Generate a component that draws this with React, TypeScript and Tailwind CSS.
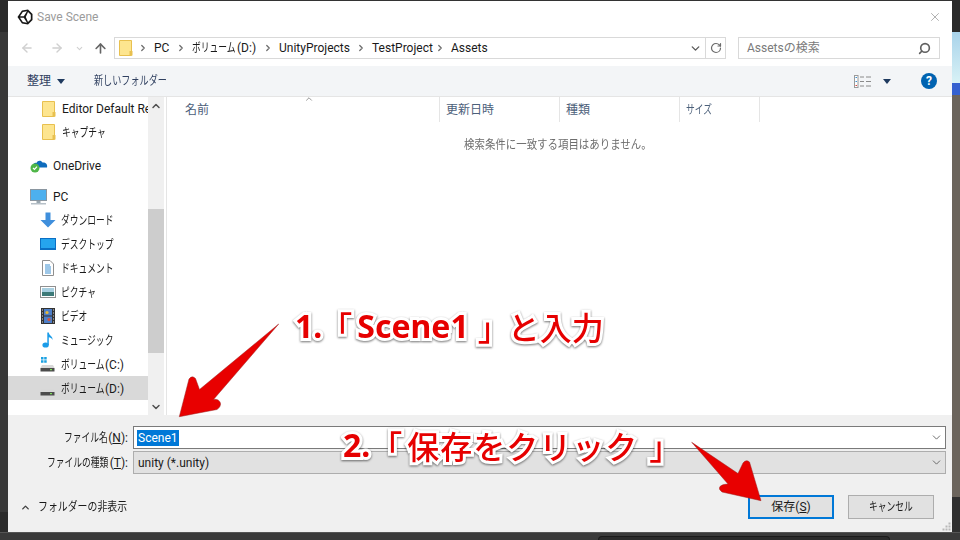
import React from "react";
import { ArrowLeft, ArrowRight, ArrowUp, ChevronDown, ChevronRight, ChevronUp, RotateCw, X, Search } from "lucide-react";

function K({ className = "", children }: { className?: string; children: React.ReactNode }) {
  return (
    <span className={"inline-block shrink-0 whitespace-nowrap " + className}>
      <span className="inline-block origin-left scale-x-[0.73] whitespace-nowrap">{children}</span>
    </span>
  );
}

function Folder({ className = "" }: { className?: string }) {
  return (
    <svg viewBox="0 0 14 16" className={"shrink-0 " + className}>
      <path d="M0.5 0.5H12.5V15.5H0.5Z" fill="#fde58f" stroke="#e8c04f" />
      <path d="M10.5 11H13.5V15.5H10.5Z" fill="#e8c04f" />
    </svg>
  );
}

function UnityLogo() {
  return (
    <svg viewBox="0 0 16 16" className="h-[16px] w-[16px] shrink-0">
      <path d="M0.5 8L5 1.5L11 0.5L15.5 5V11L11 15.5L5 14.5Z" fill="#161616" />
      <path d="M3 7.2L5.8 3L10 2.3L6.8 7.2ZM11 3L13.8 5.8V10.2L11 13L8.8 8ZM3 8.8H6.8L10 13.7L5.8 13Z" fill="#fff" />
    </svg>
  );
}

function OneDriveIcon() {
  return (
    <svg viewBox="0 0 18 16" className="h-[16px] w-[18px]">
      <path d="M3 9C3 6 5.5 5.5 6.5 6C7.5 3.5 11 3 12.5 5.5C15 5 18 7 17 10.5H3Z" fill="#0f6cbd" />
      <circle cx="5" cy="11" r="4.5" fill="#4fb648" />
      <path d="M3 11L4.5 12.5L7 9.7" fill="none" stroke="#fff" strokeWidth="1.2" />
    </svg>
  );
}

function PcIcon() {
  return (
    <svg viewBox="0 0 17 16" className="h-[16px] w-[17px]">
      <rect x="0.5" y="0.5" width="16" height="11" fill="#4db0ee" stroke="#8a96a0" />
      <rect x="6.5" y="12" width="4" height="2" fill="#9aa7b0" />
      <rect x="1" y="14" width="15" height="1.5" fill="#b6c0c8" />
    </svg>
  );
}

function DownloadIcon() {
  return (
    <svg viewBox="0 0 16 16" className="h-[16px] w-[16px]">
      <path d="M5.5 0.5H10.5V8H15.5L8 15.5L0.5 8H5.5Z" fill="#3f8fdc" />
    </svg>
  );
}

function DesktopIcon() {
  return (
    <svg viewBox="0 0 16 12" className="h-[12px] w-[16px]">
      <rect width="16" height="12" fill="#0b6fc4" />
      <rect x="1" y="1" width="14" height="9" fill="#25a4ee" />
    </svg>
  );
}

function DocIcon() {
  return (
    <svg viewBox="0 0 12 16" className="h-[16px] w-[12px]">
      <path d="M0.5 0.5H8L11.5 4V15.5H0.5Z" fill="#fff" stroke="#8f8f8f" />
      <path d="M3 5H8M3 7H9M3 9H9M3 11H9M3 13H9" stroke="#3d8fd0" strokeWidth="1" />
    </svg>
  );
}

function PictureIcon() {
  return (
    <svg viewBox="0 0 16 12" className="h-[12px] w-[16px]">
      <rect x="0.5" y="0.5" width="15" height="11" fill="#fff" stroke="#8f8f8f" />
      <rect x="2" y="2" width="12" height="4" fill="#a8cfe0" />
      <rect x="2" y="6" width="12" height="4" fill="#3d7a78" />
    </svg>
  );
}

function VideoIcon() {
  return (
    <svg viewBox="0 0 14 16" className="h-[16px] w-[14px]">
      <rect width="14" height="16" fill="#333" />
      <rect x="3" y="1" width="8" height="6.5" fill="#4e7fc8" />
      <rect x="3" y="8.5" width="8" height="6.5" fill="#4e7fc8" />
      <circle cx="6" cy="4.5" r="1.6" fill="#e8b93a" />
      <circle cx="8" cy="11.5" r="1.6" fill="#d8543a" />
      <path d="M1 2H2M1 5H2M1 8H2M1 11H2M1 14H2M12 2H13M12 5H13M12 8H13M12 11H13M12 14H13" stroke="#ddd" />
    </svg>
  );
}

function MusicIcon() {
  return (
    <svg viewBox="0 0 12 16" className="h-[16px] w-[12px]">
      <ellipse cx="3.6" cy="13" rx="3.2" ry="2.6" fill="#1b9ce8" />
      <path d="M5.3 13V0.5H6.8C7 3.5 11 4 10.5 8C9.8 6 8.2 5.5 6.8 5.3V13Z" fill="#1b9ce8" />
    </svg>
  );
}

function DriveIcon({ windows = false }: { windows?: boolean }) {
  return (
    <svg viewBox="0 0 15 15" className="h-[15px] w-[15px]">
      {windows && <path d="M1 0H3.5V2.5H1ZM4.2 0H6.7V2.5H4.2ZM1 3.2H3.5V5.7H1ZM4.2 3.2H6.7V5.7H4.2Z" fill="#1ba1e2" />}
      <path d="M2 8H13L14.5 11H0.5Z" fill="#d8d8d8" />
      <rect x="0.5" y="11" width="14" height="3.5" fill="#4c4c4c" />
      <rect x="10" y="12" width="2" height="1.2" fill="#7ee05a" />
    </svg>
  );
}

function ViewIcon() {
  return (
    <svg viewBox="0 0 17 13" className="h-[13px] w-[17px]">
      <rect x="0.5" y="0.5" width="3.5" height="12" fill="#fff" stroke="#9a9a9a" />
      <path d="M1.5 2.5H3M1.5 6.5H3" stroke="#3d8fd0" />
      <path d="M1.5 10.5H3" stroke="#d8443a" />
      <path d="M6 2H10M6 6.5H10M6 11H10M12 2H17M12 6.5H17M12 11H17" stroke="#8a8a8a" />
    </svg>
  );
}

function Caret({ className = "" }: { className?: string }) {
  return (
    <svg viewBox="0 0 8 5" className={"h-[5px] w-[8px] shrink-0 " + className}>
      <path d="M0 0H8L4 5Z" fill="#1f3a5f" />
    </svg>
  );
}

function Grip() {
  return (
    <svg viewBox="0 0 9 9" className="h-[9px] w-[9px]">
      <path d="M6.5 0.5H8.5V2.5H6.5ZM3.5 3.5H5.5V5.5H3.5ZM6.5 3.5H8.5V5.5H6.5ZM0.5 6.5H2.5V8.5H0.5ZM3.5 6.5H5.5V8.5H3.5ZM6.5 6.5H8.5V8.5H6.5Z" fill="#b8b8b8" />
    </svg>
  );
}

function Row({ icon, children, h = "h-6", indent = "pl-[32px]", selected = false }: { icon: React.ReactNode; children: React.ReactNode; h?: string; indent?: string; selected?: boolean }) {
  return (
    <div className={"flex items-center " + h + " " + indent + (selected ? " bg-[#d9d9d9]" : "")}>
      <span className="flex w-[21px] shrink-0 items-center justify-center">{icon}</span>
      <span className="ml-[3px] flex items-center whitespace-nowrap pt-px text-[#1a1a1a]">{children}</span>
    </div>
  );
}

function Crumb() {
  return <ChevronRight className="mx-[6px] h-[10px] w-[10px] shrink-0 text-[#6d6d6d]" strokeWidth={3} />;
}

function Column({ children, className }: { children: React.ReactNode; className: string }) {
  return <div className={"flex h-[25px] shrink-0 items-center border-r border-[#e5e5e5] pl-[6px] text-[#4c607a] " + className}>{children}</div>;
}

export default function App() {
  const outline = "[-webkit-text-stroke:6px_#ffffff] [paint-order:stroke_fill] drop-shadow-[0_1px_1px_rgba(0,0,0,0.55)]";
  return (
    <div className="relative flex h-[540px] w-[960px] overflow-hidden bg-[#333333] font-['Roboto','Noto_Sans_CJK_JP',sans-serif] text-[12px]">
      <div className="flex w-2 shrink-0 flex-col bg-[#333333]">
        <div className="h-[32px] bg-[#2a2a2a]" />
        <div className="flex-1 bg-[#383838]" />
        <div className="h-[28px] bg-[#2b2b2b]" />
      </div>

      <div className="mt-px flex h-[531px] w-[944px] shrink-0 flex-col bg-white">
        <div className="flex h-[32px] shrink-0 items-center pl-[9px] pr-[10px]">
          <UnityLogo />
          <span className="ml-[4px] text-[#9b9b9b]">Save Scene</span>
          <X className="ml-auto h-[14px] w-[14px] text-[#7a7a7a]" strokeWidth={1} />
        </div>

        <div className="flex h-[33px] shrink-0 items-start pt-1">
          <div className="flex h-[22px] w-[106px] shrink-0 items-center pl-[12px]">
            <ArrowLeft className="h-[14px] w-[14px] text-[#d0d0d0]" strokeWidth={2.4} />
            <ArrowRight className="ml-[16px] h-[14px] w-[14px] text-[#d0d0d0]" strokeWidth={2.4} />
            <ChevronDown className="ml-[11px] h-[9px] w-[9px] text-[#d0d0d0]" strokeWidth={3} />
            <ArrowUp className="ml-[9px] h-[15px] w-[15px] text-[#666666]" strokeWidth={2.6} />
          </div>
          <div className="flex h-[22px] w-[612px] shrink-0 items-center border border-[#d9d9d9]">
            <Folder className="ml-1 h-[16px] w-[14px]" />
            <span className="-ml-[1px]" />
            <Crumb />
            <span className="w-[16px] text-[#1a1a1a]">PC</span>
            <Crumb />
            <K className="w-[40px] text-[#1a1a1a]">ボリューム</K>
            <span className="ml-[5px] w-[20px] text-[#1a1a1a]">(D:)</span>
            <Crumb />
            <span className="w-[71px] whitespace-nowrap text-[#1a1a1a]">UnityProjects</span>
            <Crumb />
            <span className="w-[57px] whitespace-nowrap text-[#1a1a1a]">TestProject</span>
            <Crumb />
            <span className="text-[#1a1a1a]">Assets</span>
            <div className="ml-auto flex h-full items-center">
              <ChevronDown className="mr-[3px] h-[13px] w-[13px] text-[#5a5a5a]" strokeWidth={2.5} />
              <div className="flex h-full w-[20px] items-center justify-center border-l border-[#d9d9d9]">
                <RotateCw className="h-[12px] w-[12px] text-[#6a6a6a]" strokeWidth={2.4} />
              </div>
            </div>
          </div>
          <div className="ml-[12px] flex h-[22px] w-[202px] shrink-0 items-center border border-[#d9d9d9] pl-[8px] pr-[8px] text-[#7a7a7a]">
            <span>Assets</span>
            <span>の検索</span>
            <Search className="ml-auto h-[13px] w-[13px] -scale-x-100 text-[#5f5f5f]" strokeWidth={3} />
          </div>
        </div>

        <div className="flex h-[31px] shrink-0 items-center border-b border-[#e5e5e5] bg-[#f3f5f7] pl-[19px] pr-[15px] text-[#1a1a1a]">
          <span className="text-[#304060]">整理</span>
          <Caret className="ml-[6px]" />
          <K className="ml-[29px] w-[73px] text-[#304060]">
            <span className="inline-block origin-left scale-x-[1.04]">新しいフォルダー</span>
          </K>
          <div className="ml-auto flex items-center">
            <ViewIcon />
            <Caret className="ml-[12px]" />
            <div className="ml-[30px] flex h-[16px] w-[16px] items-center justify-center rounded-full bg-[#0063b1] text-[12px] font-bold text-white">?</div>
          </div>
        </div>

        <div className="flex min-h-0 flex-1">
          <div className="w-[140px] shrink-0 overflow-hidden">
            <Row h="h-[23px]" icon={<Folder className="h-[16px] w-[14px]" />} indent="pl-[30px]">
              <span className="-mt-px">Editor Default Re</span>
            </Row>
            <Row icon={<Folder className="h-[16px] w-[14px]" />} indent="pl-[30px]">
              <K>キャプチャ</K>
            </Row>
            <div className="h-[9px]" />
            <Row indent="pl-[20px]" icon={<OneDriveIcon />}>
              <span className="ml-px">OneDrive</span>
            </Row>
            <div className="h-2" />
            <Row h="h-[23px]" indent="pl-[20px]" icon={<PcIcon />}>
              <span className="ml-px">PC</span>
            </Row>
            <Row indent="pl-[29px]" icon={<DownloadIcon />}><K>ダウンロード</K></Row>
            <Row indent="pl-[29px]" icon={<DesktopIcon />}><K>デスクトップ</K></Row>
            <Row indent="pl-[29px]" icon={<DocIcon />}><K>ドキュメント</K></Row>
            <Row indent="pl-[29px]" icon={<PictureIcon />}><K>ピクチャ</K></Row>
            <Row indent="pl-[29px]" icon={<VideoIcon />}><K>ビデオ</K></Row>
            <Row indent="pl-[29px]" icon={<MusicIcon />}><K>ミュージック</K></Row>
            <Row indent="pl-[29px]" icon={<DriveIcon windows />}><K className="w-[44px]">ボリューム</K><span>(C:)</span></Row>
            <Row indent="pl-[29px]" selected icon={<DriveIcon />}><K className="w-[44px]">ボリューム</K><span>(D:)</span></Row>
          </div>

          <div className="flex w-[16px] shrink-0 flex-col items-center bg-[#f0f0f0]">
            <div className="flex h-[17px] shrink-0 items-center justify-center">
              <ChevronUp className="h-[12px] w-[12px] text-[#505050]" strokeWidth={3} />
            </div>
            <div className="h-[95px] shrink-0" />
            <div className="h-[144px] w-full shrink-0 bg-[#cdcdcd]" />
            <div className="flex-1" />
            <div className="flex h-[17px] shrink-0 items-center justify-center">
              <ChevronDown className="h-[12px] w-[12px] text-[#505050]" strokeWidth={3} />
            </div>
          </div>

          <div className="ml-[2px] min-w-0 flex-1 border-l border-[#e5e5e5]">
            <div className="relative flex">
              <Column className="w-[273px] pl-[18px]">名前</Column>
              <Column className="w-[120px]">更新日時</Column>
              <Column className="w-[120px]">種類</Column>
              <Column className="w-[80px]"><K>サイズ</K></Column>
              <ChevronUp className="absolute left-[137px] top-[-3px] h-[10px] w-[10px] text-[#5a5a5a]" strokeWidth={1.5} />
            </div>
            <div className="mt-[14px] flex w-[782px] justify-center">
              <span className="text-[#6d6d6d]">
                <span className="inline-block w-[188px] whitespace-nowrap">
                  <span className="inline-block origin-left scale-x-[0.87] whitespace-nowrap">検索条件に一致する項目はありません。</span>
                </span>
              </span>
            </div>
          </div>
        </div>

        <div className="flex h-[117px] shrink-0 flex-col bg-[#f0f0f0] pt-[11px]">
          <div className="flex h-[23px] shrink-0 items-center">
            <div className="mr-[5px] flex w-[120px] shrink-0 items-center justify-end text-[#1a1a1a]">
              <K className="w-[44px]">ファイル名</K>
              <span>(<span className="underline">N</span>):</span>
            </div>
            <div className="flex h-[23px] w-[813px] items-center border border-[#7a7a7a] bg-white pl-[3px] pr-[1px]">
              <span className="flex h-[16px] items-center bg-[#0078d7] px-px text-white">Scene1</span>
              <ChevronDown className="ml-auto mr-[1px] h-[13px] w-[13px] text-[#5a5a5a]" strokeWidth={1.6} />
            </div>
          </div>
          <div className="mt-[2px] flex h-[23px] shrink-0 items-center">
            <div className="mr-[5px] flex w-[120px] shrink-0 items-center justify-end text-[#1a1a1a]">
              <K className="w-[63px]">ファイルの種類</K>
              <span>(<span className="underline">T</span>):</span>
            </div>
            <div className="flex h-[23px] w-[813px] items-center border border-[#adadad] bg-[#e1e1e1] pl-[3px] pr-[1px] text-[#1a1a1a]">
              <span className="pl-px">unity (*.unity)</span>
              <ChevronDown className="ml-auto mr-[1px] h-[13px] w-[13px] text-[#5a5a5a]" strokeWidth={1.6} />
            </div>
          </div>
          <div className="mt-[21px] flex shrink-0 items-center pl-[12px]">
            <ChevronUp className="h-[11px] w-[11px] text-[#404040]" strokeWidth={3} />
            <K className="ml-[7px] w-[89px] text-[#1a1a1a]">
              <span className="inline-block origin-left scale-x-[1.13]">フォルダーの非表示</span>
            </K>
            <div className="ml-auto flex h-[24px] w-[86px] items-center justify-center border-2 border-[#0078d7] bg-[#e1e1e1] text-[#1a1a1a]">
              <span>保存(<span className="underline">S</span>)</span>
            </div>
            <div className="ml-[14px] mr-[18px] flex h-[24px] w-[86px] items-center justify-center border border-[#adadad] bg-[#e1e1e1] text-[#1a1a1a]">
              <K className="w-[45px]">キャンセル</K>
            </div>
          </div>
          <div className="mt-auto flex justify-end pb-px pr-px">
            <Grip />
          </div>
        </div>
      </div>

      <div className="flex w-2 shrink-0 flex-col">
        <div className="h-[32px] bg-[#2a2a2a]" />
        <div className="h-[51px] bg-gradient-to-b from-[#a9d3ea] to-[#d8f2f6]" />
        <div className="h-[12px] bg-[#3461d0]" />
        <div className="h-[402px] bg-[#6b645c]" />
        <div className="flex-1 bg-[#2f2f2f]" />
      </div>

      <div className="absolute bottom-0 left-0 right-0 flex h-[8px] items-end border-t border-[#555555] bg-[#3a3a3a] pl-[598px]">
        <div className="h-[4px] w-[292px] rounded-t-md border border-b-0 border-[#1a1a1a] bg-[#2a2a2a]" />
      </div>

      <svg viewBox="0 0 960 540" className="pointer-events-none absolute left-0 top-0 h-[540px] w-[960px]">
        <path d="M278.7 324L199.5 389.5L195.5 378.5Q192 375 189 379L179.3 416.7L217 409.5Q222 406 220 402Q218 398.5 213.5 399.5Z" fill="#e80000" stroke="#9a2020" strokeWidth="0.5" />
        <path d="M691.7 442.3L738 473.5L743 463Q746 459 749.5 462L761 500.7L722 492Q718 489 720 486.5Q722 484 728 484Z" fill="#e80000" stroke="#9a2020" strokeWidth="0.5" />
      </svg>

      <div className={"absolute left-[295px] top-[303px] flex items-center font-['Noto_Sans','Noto_Sans_CJK_JP',sans-serif] text-[32px] leading-[46px] text-[#e60000] " + outline}>
        <span className="font-bold">1.</span>
        <span className="-ml-[2px] font-['Noto_Sans_CJK_JP'] font-medium">「</span>
        <span className="ml-[5px] font-bold">Scene1</span>
        <span className="ml-[9px] font-['Noto_Sans_CJK_JP'] font-medium">」</span>
        <span className="-ml-[2px] font-['Noto_Sans_CJK_JP'] font-medium">と入力</span>
      </div>

      <div className={"absolute left-[343px] top-[422px] flex items-center font-['Noto_Sans','Noto_Sans_CJK_JP',sans-serif] text-[32px] leading-[46px] text-[#e60000] " + outline}>
        <span className="font-bold">2.</span>
        <span className="font-['Noto_Sans_CJK_JP'] font-medium">「</span>
        <span className="ml-[5px] font-['Noto_Sans_CJK_JP'] font-medium tracking-[1px]">保存をクリック</span>
        <span className="ml-[11px] font-['Noto_Sans_CJK_JP'] font-medium">」</span>
      </div>
    </div>
  );
}
